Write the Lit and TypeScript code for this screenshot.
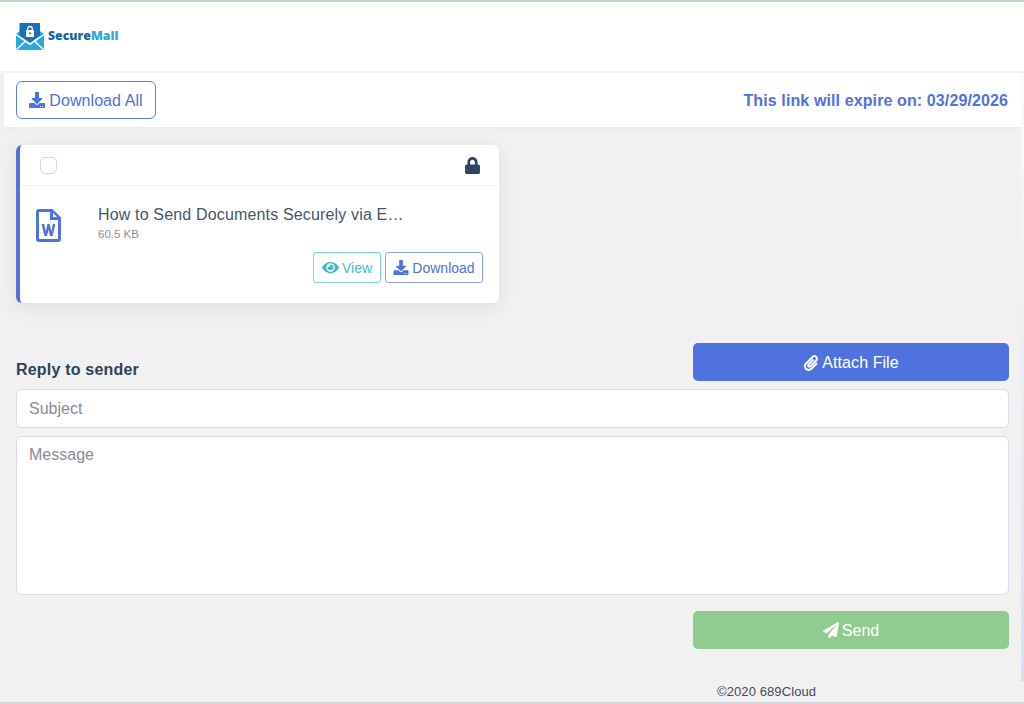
import { LitElement, html, css, svg } from "lit";
import { customElement } from "lit/decorators.js";

const DL = svg`<path d="M216 0h80c13 0 24 11 24 24v168h88c18 0 27 21 14 34L270 378c-8 8-20 8-28 0L90 226c-13-13-4-34 14-34h88V24c0-13 11-24 24-24zm296 376v112c0 13-11 24-24 24H24c-13 0-24-11-24-24V376c0-13 11-24 24-24h147l49 49c20 20 52 20 72 0l49-49h147c13 0 24 11 24 24zm-124 88c0-11-9-20-20-20s-20 9-20 20 9 20 20 20 20-9 20-20zm64 0c0-11-9-20-20-20s-20 9-20 20 9 20 20 20 20-9 20-20z"/>`;

@customElement("app-root")
export class AppRoot extends LitElement {
  static styles = css`
    :host { display: block; height: 704px; overflow: hidden; background: #f1f1f2; font-family: "Liberation Sans", Arial, sans-serif; color: #45566a; box-sizing: border-box; border-top: 2px solid #bcd9bc; border-bottom: 2px solid #d9d4e0; }
    * { box-sizing: border-box; }
    .head { height: 71px; background: #fff; padding: 21px 0 0 16px; display: flex; align-items: flex-start; gap: 4px; border-bottom: 2px solid #f3f3f7; }
    .brand { font-family: "Open Sans", sans-serif; font-weight: 800; font-size: 12.3px; line-height: 25px; color: #1a689f; }
    .brand span { color: #2ba9e0; }
    .row { display: flex; height: 629px; }
    .main { flex: 1; min-width: 0; display: flex; flex-direction: column; }
    .strip { width: 3px; height: 608px; flex: none; background: linear-gradient(#fbfbfe, #f4f5fb 20%, #d8dff0); }
    .bar { margin-left: 4px; height: 54px; flex: none; background: #fff; padding: 8px 13px 0 12px; display: flex; align-items: flex-start; justify-content: space-between; box-shadow: 0 1px 6px rgba(0,0,0,.03); }
    .all { height: 38px; width: 140px; border: 1px solid #5b7be4; border-radius: 6px; background: #fff; color: #4f72e0; font: 16px/36px "Liberation Sans", Arial, sans-serif; letter-spacing: .08px; display: flex; align-items: center; justify-content: center; gap: 4px; padding: 1px 0 0; }
    .all svg { width: 16px; height: 16px; fill: #4f72e0; margin-top: -1px; }
    .exp { font-weight: 700; font-size: 16px; line-height: 38px; padding-top: 1px; color: #4f72e0; letter-spacing: .11px; }
    .card { margin: 18px 0 0 16px; width: 483px; height: 158px; flex: none; background: #fff; border-left: 4px solid #4f72e0; border-radius: 6px; box-shadow: 0 4px 20px rgba(0,0,0,.08); display: flex; flex-direction: column; }
    .ctop { height: 41px; flex: none; border-bottom: 1px solid #eeeef2; display: flex; align-items: center; justify-content: space-between; padding: 0 19px 0 20px; }
    .check { width: 17px; height: 17px; border: 1px solid #d5d5de; border-radius: 5px; background: #fff; }
    .lock { width: 15px; height: 17px; fill: #2c4560; display: block; }
    .cbody { flex: 1; display: grid; grid-template-columns: 62px 1fr; padding: 23px 16px 0 16px; }
    .doc { width: 25px; height: 33px; fill: #4f72e0; display: block; }
    .name { font-size: 16px; line-height: 18px; letter-spacing: .16px; width: 308px; overflow: hidden; white-space: nowrap; text-overflow: ellipsis; margin-top: -3px; }
    .size { font-size: 11.5px; line-height: 14px; color: #8e8e98; margin-top: 3px; }
    .acts { grid-column: 1 / 3; display: flex; justify-content: flex-end; gap: 4px; margin-top: -10px; }
    .act { height: 31px; border: 1px solid; border-radius: 3px; background: #fff; display: flex; align-items: center; justify-content: center; gap: 3px; font: 14px "Liberation Sans", Arial, sans-serif; padding: 0; }
    .act svg { width: 16px; height: 15px; }
    .view { width: 68px; color: #45bdd0; border-color: #7bd3de; }
    .view svg { fill: #3dbbcf; width: 17px; height: 15px; }
    .dl { width: 98px; color: #4f72e0; border-color: #8ea3ec; }
    .dl svg { fill: #4f72e0; }
    .reply { padding: 0 12px 0 16px; margin-top: 40px; flex: none; }
    .rhead { display: flex; justify-content: space-between; align-items: flex-end; height: 38px; }
    .rt { font-weight: 700; font-size: 16px; line-height: 18px; letter-spacing: .2px; color: #2f4256; margin-bottom: 2px; }
    .btn { width: 316px; height: 38px; border: 0; border-radius: 5px; color: #fff; font: 16px "Liberation Sans", Arial, sans-serif; letter-spacing: .08px; display: flex; align-items: center; justify-content: center; gap: 3px; padding: 2px 0 0; }
    .btn svg { fill: #fff; width: 16px; height: 16px; margin-top: -1px; }
    .attach { background: #4f72e0; }
    .send { background: #90cb90; margin: 16px 0 0 auto; padding-top: 1px; }
    .field { display: block; width: 100%; background: #fff; border: 1px solid #dedbe8; border-radius: 6px; color: #8a8c9a; font-size: 16px; line-height: 18px; padding: 10px 12px; }
    .subj { height: 39px; margin-top: 8px; }
    .msg { height: 159px; margin-top: 8px; padding-top: 9px; }
    .foot { font-size: 13px; line-height: 14px; letter-spacing: .1px; color: #4a4a55; margin: 36px 0 0 701px; }
  `;

  render() {
    return html`
      <div class="head">
        <svg width="28" height="27" viewBox="0 0 28 27">
          <path d="M0 11 L4 8 V16 Z M28 11 L24 8 V16 Z" fill="#29a9e0"/>
          <path d="M3.5 0h20.5v13l-10 7-10.5-7Z" fill="#1a72b8"/>
          <path d="M0 12 L14 22 L28 12 V26 a1 1 0 0 1-1 1H1a1 1 0 0 1-1-1Z" fill="#29a9e0"/>
          <path d="M0.5 26.5L10 17.8M27.5 26.5L18 17.8" stroke="#fff" stroke-width="1.5" fill="none"/>
          <path d="M0 11.5 L14 21.5 L28 11.5" stroke="#fff" stroke-width="1.3" fill="none"/>
          <rect x="10" y="7" width="8" height="7" rx="1" fill="#fff"/>
          <path d="M11.7 7.5V5.8a2.3 2.3 0 0 1 4.6 0V7.5" fill="none" stroke="#fff" stroke-width="1.3"/>
          <circle cx="14" cy="10.3" r="1" fill="#1a72b8"/>
        </svg>
        <div class="brand">Secure<span>Mail</span></div>
      </div>
      <div class="row">
        <div class="main">
          <div class="bar">
            <button class="all"><svg viewBox="0 0 512 512">${DL}</svg>Download All</button>
            <div class="exp">This link will expire on: 03/29/2026</div>
          </div>
          <div class="card">
            <div class="ctop">
              <div class="check"></div>
              <svg class="lock" viewBox="0 0 448 512"><path d="M400 224h-24v-72C376 68 308 0 224 0S72 68 72 152v72H48c-26 0-48 22-48 48v192c0 26 22 48 48 48h352c26 0 48-22 48-48V272c0-26-22-48-48-48zm-104 0H152v-72c0-40 32-72 72-72s72 32 72 72v72z"/></svg>
            </div>
            <div class="cbody">
              <svg class="doc" viewBox="0 0 25 33"><path fill-rule="evenodd" d="M3 0h13.5L25 8.5V30a3 3 0 0 1-3 3H3a3 3 0 0 1-3-3V3a3 3 0 0 1 3-3Zm0 3v27h19V11h-8V3Zm14 1v4h4Z"/><path d="M5.6 15h2.6l1.5 7.4L11.4 15h2.2l1.7 7.4L16.8 15h2.6l-2.8 12H14l-1.5-6.6L11 27H8.4Z"/></svg>
              <div>
                <div class="name">How to Send Documents Securely via Email for Business</div>
                <div class="size">60.5 KB</div>
              </div>
              <div class="acts">
                <button class="act view"><svg viewBox="0 0 576 512"><path d="M572 241C518 135 410 64 288 64S58 135 4 241a32 32 0 0 0 0 30c54 106 162 177 284 177s230-71 284-177a32 32 0 0 0 0-30zM288 400a144 144 0 1 1 144-144 144 144 0 0 1-144 144zm0-240a95 95 0 0 0-25 4 48 48 0 0 1-67 67 96 96 0 1 0 92-71z"/></svg>View</button>
                <button class="act dl"><svg viewBox="0 0 512 512">${DL}</svg>Download</button>
              </div>
            </div>
          </div>
          <div class="reply">
            <div class="rhead">
              <div class="rt">Reply to sender</div>
              <button class="btn attach"><svg viewBox="0 0 448 512"><path d="M43 466c-58-60-57-157 1-217L253 36c44-45 116-45 160 0 44 45 44 117 0 162L231 384c-30 30-78 30-107-1-28-30-27-78 2-107l143-146c6-6 16-6 22 0l23 23c6 6 6 16 0 23L171 321c-5 5-5 13-1 18 4 4 11 4 15 0l182-186c20-20 20-52 0-72-19-20-50-20-69 0L89 294c-35 35-35 92-1 128 35 35 90 35 124 0l171-175c6-6 16-6 23 0l22 23c6 6 6 16 0 22L257 467c-59 60-155 60-214-1z"/></svg>Attach File</button>
            </div>
            <div class="field subj">Subject</div>
            <div class="field msg">Message</div>
            <button class="btn send"><svg viewBox="0 0 512 512"><path d="M476 3L12 270c-18 10-16 35 2 43l106 45 288-254c6-5 14 3 9 9L176 408v82c0 24 29 33 43 16l64-78 125 53c14 6 31-3 33-18L513 28c3-20-19-35-37-25z"/></svg>Send</button>
            <div class="foot">©2020 689Cloud</div>
          </div>
        </div>
        <div class="strip"></div>
      </div>`;
  }
}
